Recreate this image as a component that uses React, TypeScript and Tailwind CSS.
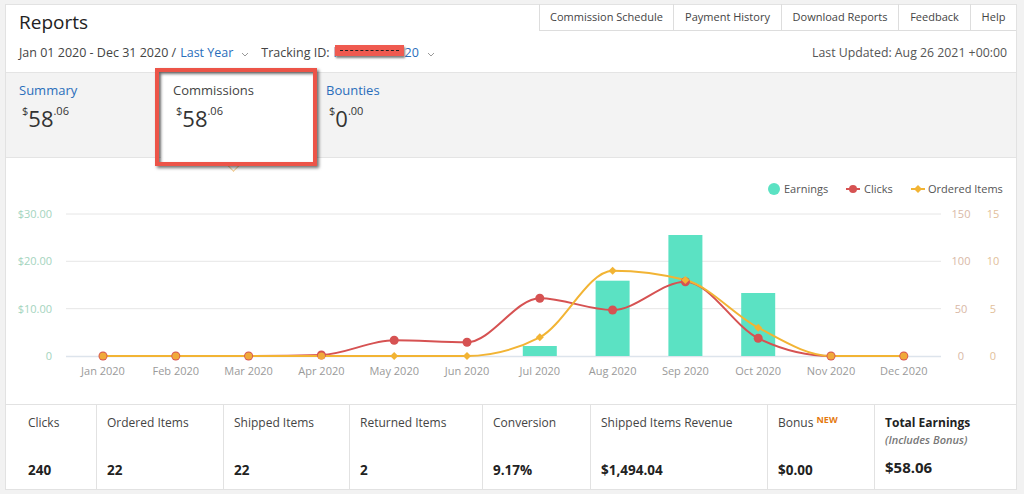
import React from "react";

const months = ["Jan 2020","Feb 2020","Mar 2020","Apr 2020","May 2020","Jun 2020","Jul 2020","Aug 2020","Sep 2020","Oct 2020","Nov 2020","Dec 2020"];
const X = (i: number) => 103 + i * 72.8;
const clicksY = [356, 356, 356, 355, 340.3, 342.3, 298.3, 310, 281.7, 338.3, 356, 356];
const itemsY = [356, 356, 356, 356, 356, 356, 337.3, 270.7, 280, 327.7, 356, 356];
const bars: [number, number][] = [[6, 346], [7, 280.7], [8, 235], [9, 293]];

function monotone(ys: number[]): string {
  const xs = ys.map((_, i) => X(i));
  const n = ys.length;
  const d: number[] = [];
  for (let k = 0; k < n - 1; k++) d.push((ys[k + 1] - ys[k]) / (xs[k + 1] - xs[k]));
  const m: number[] = new Array(n).fill(0);
  for (let k = 1; k < n - 1; k++) {
    const s0 = d[k - 1], s1 = d[k];
    const h0 = xs[k] - xs[k - 1], h1 = xs[k + 1] - xs[k];
    const p = (s0 * h1 + s1 * h0) / (h0 + h1);
    m[k] = (Math.sign(s0) + Math.sign(s1)) * Math.min(Math.abs(s0), Math.abs(s1), 0.5 * Math.abs(p)) || 0;
  }
  m[0] = d[0];
  m[n - 1] = d[n - 2];
  let path = `M${xs[0]},${ys[0]}`;
  for (let k = 0; k < n - 1; k++) {
    const h = xs[k + 1] - xs[k];
    path += ` C${xs[k] + h / 3},${ys[k] + (m[k] * h) / 3} ${xs[k + 1] - h / 3},${ys[k + 1] - (m[k + 1] * h) / 3} ${xs[k + 1]},${ys[k + 1]}`;
  }
  return path;
}

const RED = "#d65252";
const YEL = "#f2b434";
const TEAL = "#5be2c3";

function Chevron() {
  return (
    <svg width="8" height="5" viewBox="0 0 8 5" className="inline-block ml-[8px] mt-[2px]">
      <path d="M1 1 L4 4 L7 1" fill="none" stroke="#999" strokeWidth="1" />
    </svg>
  );
}

function Money({ whole, cents }: { whole: string; cents: string }) {
  return (
    <div className="flex items-start text-[#333] mt-[5px] pl-[3px]">
      <span className="text-[11px] leading-[13px]">$</span>
      <span className="text-[22px] leading-[26px] mt-[1px]">{whole}</span>
      <span className="text-[11px] leading-[13px]">.{cents}</span>
    </div>
  );
}

function Chart() {
  const grid = [214, 261.3, 308.7];
  const left = ["$30.00", "$20.00", "$10.00", "0"];
  const r1 = ["150", "100", "50", "0"];
  const r2 = ["15", "10", "5", "0"];
  const ys = [214, 261.3, 308.7, 356];
  return (
    <svg width="1010" height="246" viewBox="6 158 1010 246" className="block" fontFamily="'Open Sans', sans-serif">
      {grid.map((y) => (
        <line key={y} x1="66" x2="941" y1={y} y2={y} stroke="#e6e6e6" strokeWidth="1" />
      ))}
      <line x1="66" x2="941" y1="356.5" y2="356.5" stroke="#dde4ec" strokeWidth="1.5" />
      {ys.map((y, i) => (
        <g key={i} fontSize="11">
          <text x="52" y={y + 4} textAnchor="end" fill="#a4d4be">{left[i]}</text>
          <text x="961" y={y + 4} textAnchor="middle" fill="#d9b8a6">{r1[i]}</text>
          <text x="993" y={y + 4} textAnchor="middle" fill="#e2c09a">{r2[i]}</text>
        </g>
      ))}
      {months.map((m, i) => (
        <text key={m} x={X(i)} y="375" textAnchor="middle" fontSize="11" fill="#9a9a9a">{m}</text>
      ))}
      {bars.map(([i, top]) => (
        <rect key={i} x={X(i) - 17} y={top} width="34" height={356 - top} fill={TEAL} />
      ))}
      <path d={monotone(clicksY)} fill="none" stroke={RED} strokeWidth="2" />
      <path d={monotone(itemsY)} fill="none" stroke={YEL} strokeWidth="2" />
      {clicksY.map((y, i) => (
        <circle key={"c" + i} cx={X(i)} cy={y} r="4.5" fill={RED} />
      ))}
      {itemsY.map((y, i) =>
        y === 356 && clicksY[i] >= 355 ? (
          <circle key={"o" + i} cx={X(i)} cy={y} r="3.6" fill="#f0a93a" />
        ) : (
          <path key={"d" + i} d={`M${X(i)},${y - 4} L${X(i) + 4},${y} L${X(i)},${y + 4} L${X(i) - 4},${y} Z`} fill={YEL} />
        )
      )}
      {/* legend */}
      <circle cx="774" cy="189" r="6" fill={TEAL} />
      <text x="784" y="193" fontSize="11" fill="#555">Earnings</text>
      <line x1="846" x2="860" y1="189" y2="189" stroke={RED} strokeWidth="2" />
      <circle cx="853" cy="189" r="4" fill={RED} />
      <text x="864" y="193" fontSize="11" fill="#555">Clicks</text>
      <line x1="911" x2="925" y1="189" y2="189" stroke={YEL} strokeWidth="2" />
      <path d="M918,185 L922,189 L918,193 L914,189 Z" fill={YEL} />
      <text x="928" y="193" fontSize="11" fill="#555">Ordered Items</text>
    </svg>
  );
}

const stats: { label: React.ReactNode; value: string; w: string; first?: boolean }[] = [
  { label: "Clicks", value: "240", w: "w-[91px]", first: true },
  { label: "Ordered Items", value: "22", w: "w-[127px]" },
  { label: "Shipped Items", value: "22", w: "w-[126px]" },
  { label: "Returned Items", value: "2", w: "w-[133px]" },
  { label: "Conversion", value: "9.17%", w: "w-[108px]" },
  { label: "Shipped Items Revenue", value: "$1,494.04", w: "w-[177px]" },
  {
    label: (
      <span>
        Bonus <span className="text-[#e47911] font-bold text-[9px] align-top leading-[12px]">NEW</span>
      </span>
    ),
    value: "$0.00",
    w: "w-[107px]",
  },
];

export default function App() {
  return (
    <div className="relative w-[1024px] h-[494px] overflow-hidden bg-[#f2f2f2] pt-[4px] pl-[5px] font-['Open_Sans',sans-serif] text-[#333]">
      <div className="w-[1012px] bg-white border-x border-t border-[#e2e2e2]">
        {/* header row */}
        <div className="h-[30px] flex justify-between">
          <div className="pl-[13px] pt-[5px] text-[19px] leading-[24px] text-[#222]">Reports</div>
          <div className="flex h-[27px] -mt-[1px] text-[11px] text-[#444]">
            <div className="w-[134px] flex items-center justify-center border-l border-b border-[#ddd]">Commission Schedule</div>
            <div className="w-[108px] flex items-center justify-center border-l border-b border-[#ddd]">Payment History</div>
            <div className="w-[117px] flex items-center justify-center border-l border-b border-[#ddd]">Download Reports</div>
            <div className="w-[72px] flex items-center justify-center border-l border-b border-[#ddd]">Feedback</div>
            <div className="w-[46px] flex items-center justify-center border-l border-b border-[#ddd]">Help</div>
          </div>
        </div>
        {/* date row */}
        <div className="h-[37px] flex items-center justify-between pl-[13px] pr-[9px] text-[12.5px] text-[#444]">
          <div className="flex items-center">
            <span>Jan 01 2020 - Dec 31 2020 / </span>
            <span className="text-[#2a6ebb] ml-[4px]">Last Year</span>
            <Chevron />
            <span className="ml-[12px]">Tracking ID: </span>
            <span className="relative text-[#2a6ebb] ml-[4px] inline-block w-[71px]">
              l
              <span className="absolute left-[1px] top-[1px] w-[69px] h-[11px] bg-[#ef5a50] shadow-[1px_2px_2px_rgba(0,0,0,0.5)] flex items-center px-[5px]">
                <span className="block w-full border-t border-dashed border-[#222]" />
              </span>
            </span>
            <span className="text-[#2a6ebb]">20</span>
            <Chevron />
          </div>
          <div className="text-[12.3px] text-[#555]">Last Updated: Aug 26 2021 +00:00</div>
        </div>
        {/* tabs */}
        <div className="h-[86px] bg-[#f3f3f3] border-y border-[#e4e4e4] flex pl-[1px]">
          <div className="w-[154px] pl-[12px] pt-[8px]">
            <div className="text-[13px] leading-[18px] text-[#2a6ebb]">Summary</div>
            <Money whole="58" cents="06" />
          </div>
          <div className="w-[153px] pl-[12px] pt-[8px] bg-white border-r border-[#f3c98a] -mb-[1px]">
            <div className="text-[13px] leading-[18px] text-[#444]">Commissions</div>
            <Money whole="58" cents="06" />
          </div>
          <div className="w-[153px] pl-[12px] pt-[8px]">
            <div className="text-[13px] leading-[18px] text-[#2a6ebb]">Bounties</div>
            <Money whole="0" cents="00" />
          </div>
        </div>
        <Chart />
      </div>
      {/* stats */}
      <div className="w-[1012px] h-[86px] bg-white border border-[#e2e2e2] flex">
        {stats.map((s, i) => (
          <div key={i} className={`${s.w} h-full border-r border-[#e2e2e2] ${s.first ? "pl-[22px]" : "pl-[10px]"} pt-[9px]`}>
            <div className="text-[12px] leading-[18px] text-[#444]">{s.label}</div>
            <div className="mt-[29px] text-[13.5px] font-bold leading-[18px] text-[#222]">{s.value}</div>
          </div>
        ))}
        <div className="flex-1 pl-[10px] pt-[9px]">
          <div className="text-[12px] leading-[18px] font-bold text-[#222]">Total Earnings</div>
          <div className="text-[11px] leading-[16px] italic font-semibold text-[#777]">(Includes Bonus)</div>
          <div className="mt-[9px] text-[15px] font-bold leading-[20px] text-[#222]">$58.06</div>
        </div>
      </div>
      {/* caret under selected tab */}
      <div className="absolute left-[229px] top-[161px] w-[9px] h-[9px] rotate-45 bg-white border-r border-b border-[#f3c98a]" />
      {/* annotation box */}
      <div className="absolute left-[155px] top-[68px] w-[162px] h-[98px] border-[4px] border-[#ec5448] shadow-[2px_2px_3px_rgba(0,0,0,0.55),inset_2px_2px_3px_rgba(0,0,0,0.55)]" />
    </div>
  );
}
